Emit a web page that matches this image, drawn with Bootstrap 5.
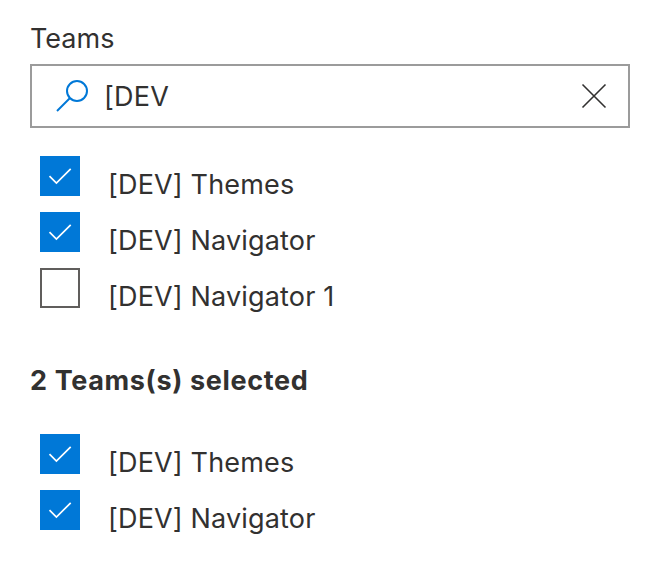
<!DOCTYPE html>
<html lang="en">
<head>
<meta charset="utf-8">
<meta name="viewport" content="width=device-width, initial-scale=1">
<title>Teams</title>
<link href="https://cdn.jsdelivr.net/npm/bootstrap@5.3.0/dist/css/bootstrap.min.css" rel="stylesheet">
<style>
body{font-family:Inter,"Liberation Sans",sans-serif;font-size:27px;line-height:40px;color:#323130;background:#fff}
.picker{padding:19px 28px 0 30px}
.team-label{line-height:40px;margin-bottom:5px}
.search-box{height:64px;border:2px solid #9b9b9b;padding:0 20px 0 23px}
.search-text{margin-left:15px;padding-top:2px;letter-spacing:.2px}
.team-list{margin:28px 0 0 10px}
.team-row{height:56px;margin:0}
.tick{width:40px;height:40px;background:#0078d7;flex:none}
.tick.off{background:#fff;border:2px solid #605e5c}
.team-name{margin-left:28px;padding-top:9px;letter-spacing:.16px}
.summary{font-size:27px;line-height:40px;letter-spacing:.64px;margin:37px 0 0}
.chosen{margin-top:33px}
</style>
</head>
<body>
<main class="picker">
<div class="team-label">Teams</div>
<div class="search-box d-flex align-items-center">
<svg width="34" height="34" viewBox="0 0 34 34" fill="none" stroke="#0078d7" stroke-width="2"><circle cx="22" cy="12" r="10"/><path d="M15 19 2 32"/></svg>
<span class="search-text flex-grow-1">[DEV</span>
<svg width="28" height="28" viewBox="0 0 28 28" fill="none" stroke="#323130" stroke-width="1.600"><path d="M2.500 2.500 25.500 25.500M25.500 2.500 2.500 25.500"/></svg>
</div>
<div class="team-list">
<div class="team-row d-flex"><span class="tick"><svg class="d-block" width="40" height="40" fill="none" stroke="#fff" stroke-width="1.700"><path d="M9.500 20.200 16.400 27.100 30.700 12.800"/></svg></span><span class="team-name">[DEV] Themes</span></div>
<div class="team-row d-flex"><span class="tick"><svg class="d-block" width="40" height="40" fill="none" stroke="#fff" stroke-width="1.700"><path d="M9.500 20.200 16.400 27.100 30.700 12.800"/></svg></span><span class="team-name">[DEV] Navigator</span></div>
<div class="team-row d-flex"><span class="tick off"></span><span class="team-name">[DEV] Navigator 1</span></div>
</div>
<h2 class="summary fw-bold">2 Teams(s) selected</h2>
<div class="team-list chosen">
<div class="team-row d-flex"><span class="tick"><svg class="d-block" width="40" height="40" fill="none" stroke="#fff" stroke-width="1.700"><path d="M9.500 20.200 16.400 27.100 30.700 12.800"/></svg></span><span class="team-name">[DEV] Themes</span></div>
<div class="team-row d-flex"><span class="tick"><svg class="d-block" width="40" height="40" fill="none" stroke="#fff" stroke-width="1.700"><path d="M9.500 20.200 16.400 27.100 30.700 12.800"/></svg></span><span class="team-name">[DEV] Navigator</span></div>
</div>
</main>
<script src="https://cdn.jsdelivr.net/npm/bootstrap@5.3.0/dist/js/bootstrap.bundle.min.js"></script>
</body>
</html>
